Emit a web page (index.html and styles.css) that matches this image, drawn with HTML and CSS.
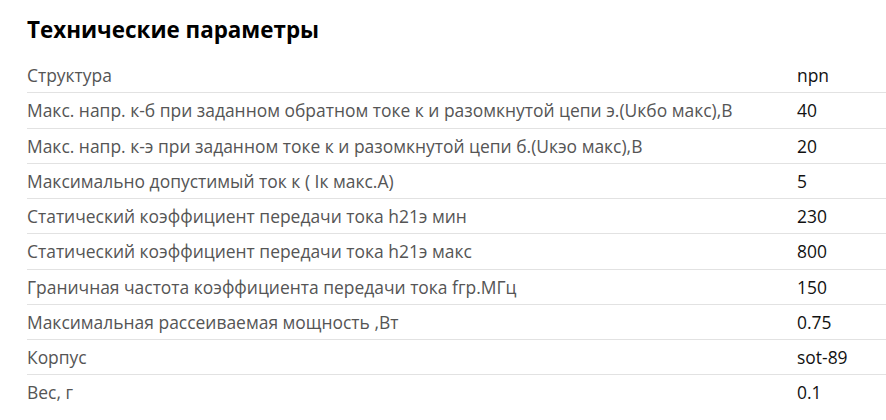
FILE: index.html
```html
<!DOCTYPE html>
<html lang="ru">
<head>
<meta charset="utf-8">
<link rel="stylesheet" href="styles.css">
</head>
<body>
<div class="specs">
  <h2 class="specs-title">Технические параметры</h2>
  <table class="specs-table">
    <tr><td class="label">Структура</td><td class="value">npn</td></tr>
    <tr><td class="label">Макс. напр. к-б при заданном обратном токе к и разомкнутой цепи э.(Uкбо макс),В</td><td class="value">40</td></tr>
    <tr><td class="label">Макс. напр. к-э при заданном токе к и разомкнутой цепи б.(Uкэо макс),В</td><td class="value">20</td></tr>
    <tr><td class="label">Максимально допустимый ток к ( Iк макс.А)</td><td class="value">5</td></tr>
    <tr><td class="label">Статический коэффициент передачи тока h21э мин</td><td class="value">230</td></tr>
    <tr><td class="label">Статический коэффициент передачи тока h21э макс</td><td class="value">800</td></tr>
    <tr><td class="label">Граничная частота коэффициента передачи тока fгр.МГц</td><td class="value">150</td></tr>
    <tr><td class="label">Максимальная рассеиваемая мощность ,Вт</td><td class="value">0.75</td></tr>
    <tr><td class="label">Корпус</td><td class="value">sot-89</td></tr>
    <tr><td class="label">Вес, г</td><td class="value">0.1</td></tr>
  </table>
</div>
</body>
</html>
```
FILE: styles.css
```css
html, body {
  margin: 0;
  padding: 0;
  background: #fff;
  font-family: "Open Sans", "Noto Sans", sans-serif;
}
.specs {
  padding: 14px 0 0 27px;
  overflow: hidden;
}
.specs-title {
  margin: 0 0 12px 0;
  font-size: 22.4px;
  font-weight: 700;
  line-height: 32px;
  color: #000;
}
.specs-table {
  border-collapse: collapse;
  width: 859px;
  font-size: 17.45px;
}
.specs-table td {
  padding: 0;
  height: 34.25px;
  line-height: 24px;
  vertical-align: middle;
  border-bottom: 1px solid #e2e2e2;
}
.specs-table tr:last-child td {
  border-bottom: none;
}
.label {
  width: 770px;
  color: #555;
}
.value {
  color: #111;
}
```
